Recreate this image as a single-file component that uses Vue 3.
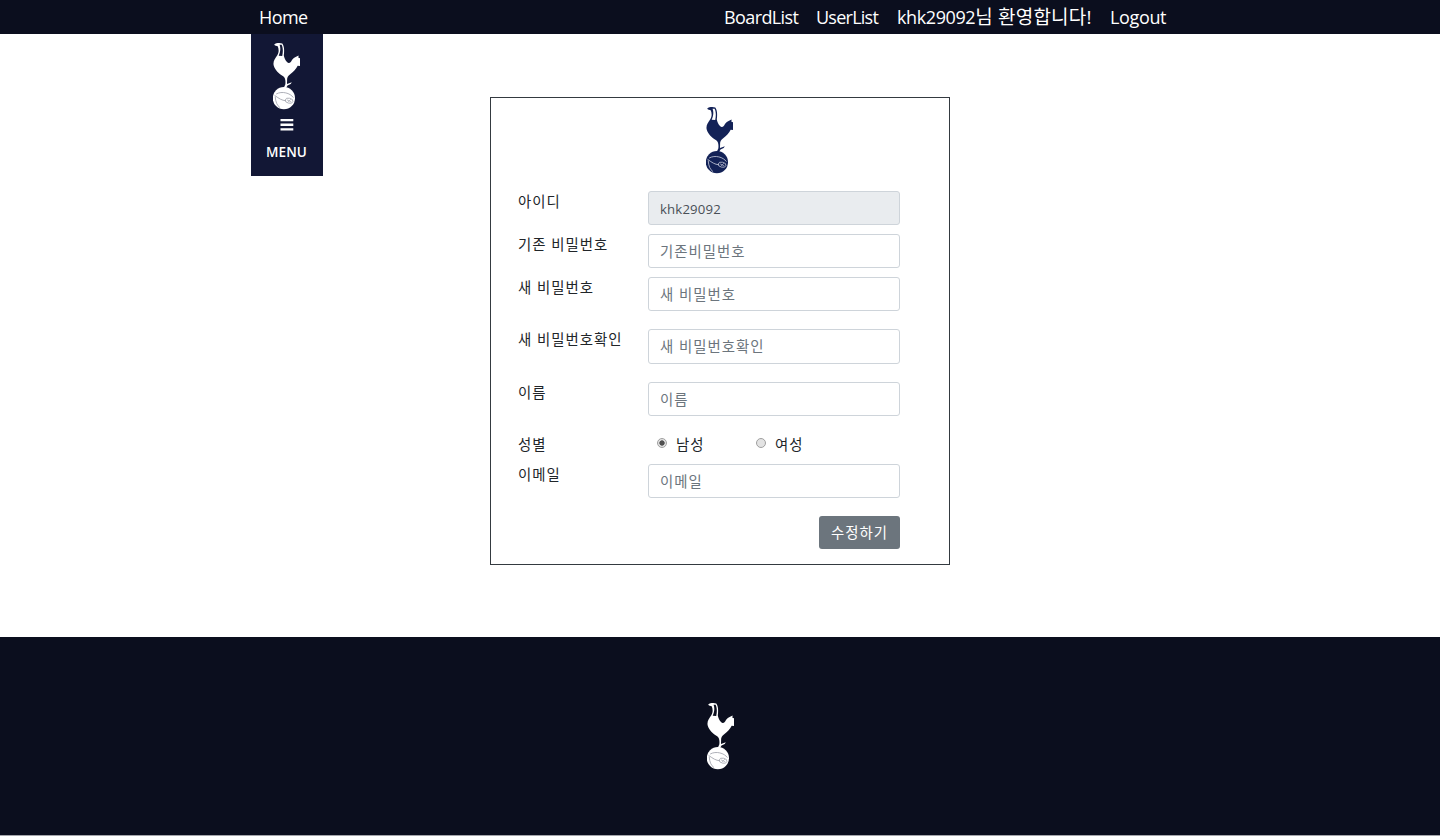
<script setup>
import { h, ref } from 'vue'

const gender = ref('male')
const fields = [
  { id: 'userid', label: '아이디', value: 'khk29092', disabled: true, cls: 'id-row' },
  { id: 'oldpw', label: '기존 비밀번호', placeholder: '기존비밀번호', type: 'password', cls: 'old-row' },
  { id: 'newpw', label: '새 비밀번호', placeholder: '새 비밀번호', type: 'password', cls: 'new-row' },
  { id: 'confirm', label: '새 비밀번호확인', placeholder: '새 비밀번호확인', type: 'password', cls: 'confirm-row' },
  { id: 'name', label: '이름', placeholder: '이름', cls: 'name-row' }
]

const Crest = (props) => h('svg', { width: 28, height: 67, viewBox: '0 0 28 67', 'aria-hidden': 'true' }, [
  h('path', { fill: props.ink, 'fill-rule': 'evenodd', d: 'M1.2 1.5C3 0 7-.4 9.3.6C11.3 3 11.4 8 10.8 12.2C11.3 15.5 13.5 19.6 15.8 19.9C17.8 20.2 18.4 17.4 20 15.8C21.6 14.3 23.5 13.6 25.6 12.6L25.4 14.8L27 15.2V23L24.7 22.8C23.2 25.8 20.5 28.8 17.2 31.3C14.8 33 14 34.8 14.1 37.2L14 41L16.8 39.9L18.8 39.3L17.7 41L14.5 42.4L13.1 45H10.7L12.3 41.4C12.8 37.7 12.2 34.8 10.2 33.3C6 30.6 2 27 .7 22.4C-.3 18.4 2.2 15.3 4.3 12.2C6.2 9 5.8 5.8 4.7 3.2L2 2.6ZM6.6 1.8C7.8 4.8 7.5 9 5.7 12.7L9.2 12.9C10.2 8.5 10 4.5 8.6 1.8Z' }),
  h('circle', { cx: 10.9, cy: 55.2, r: 11.1, fill: props.ink }),
  h('path', { fill: 'none', stroke: props.line, 'stroke-width': 0.9, d: 'M1.5 52.3C6.5 55.8 8.5 57.3 13 57.8M3.2 51C9 47.8 17.2 50 20.4 54.6M2.2 53.5C2.6 59 4 62.5 7 64.6' }),
  h('ellipse', { cx: 16.1, cy: 57.7, rx: 3.9, ry: 2.5, fill: 'none', stroke: props.line, 'stroke-width': 0.8, transform: 'rotate(12 16.1 57.7)' }),
  h('path', { fill: 'none', stroke: props.line, 'stroke-width': 0.7, d: 'M13.8 56.8L18.3 58.8M17.8 56.2L14.8 59.3' })
])
Crest.props = ['ink', 'line']
</script>

<template>
  <div class="page">
    <header class="topbar">
      <nav>
        <a class="home">Home</a>
        <div class="links">
          <a class="board">BoardList</a>
          <a class="users">UserList</a>
          <a class="welcome">khk29092<span>님 환영합니다!</span></a>
          <a class="logout">Logout</a>
        </div>
      </nav>
    </header>
    <main>
      <aside class="menu">
        <Crest ink="#ffffff" line="#a5a7b0" />
        <svg class="bars" width="14" height="12" viewBox="0 0 14 12"><path fill="#fff" d="M.5 0h12.8v2.3H.5zM.5 4.6h12.8v2.3H.5zM.5 9.2h12.8v2.3H.5z" /></svg>
        <span>MENU</span>
      </aside>
      <form class="card" @submit.prevent>
        <Crest class="card-crest" ink="#132257" line="#b7bcd0" />
        <div v-for="f in fields" :key="f.id" class="row" :class="f.cls">
          <label :for="f.id">{{ f.label }}</label>
          <input :id="f.id" class="control" :type="f.type || 'text'" :value="f.value" :placeholder="f.placeholder" :disabled="f.disabled">
        </div>
        <div class="row gender-row">
          <label>성별</label>
          <div class="options">
            <label><input v-model="gender" type="radio" value="male">남성</label>
            <label><input v-model="gender" type="radio" value="female">여성</label>
          </div>
        </div>
        <div class="row email-row">
          <label for="email">이메일</label>
          <input id="email" class="control" placeholder="이메일">
        </div>
        <button>수정하기</button>
      </form>
    </main>
    <footer><Crest ink="#ffffff" line="#a5a7b0" /></footer>
  </div>
</template>

<style>
html, body { margin: 0; overflow: hidden; background: #fff; }
</style>

<style scoped>
* { box-sizing: border-box; }
.page { height: 836px; display: flex; flex-direction: column; color: #212529; font-family: "Open Sans", "Noto Sans CJK KR", sans-serif; background: linear-gradient(#fff 835px, #a4a5ab 835px); }
svg { display: block; }
.topbar { height: 34px; background: #0b0e1e; flex: none; }
nav { width: 908px; height: 34px; margin-left: 259px; display: flex; justify-content: space-between; color: #fff; font-size: 18px; line-height: 35px; white-space: nowrap; }
.links { display: flex; gap: 18px; }
.home { letter-spacing: -.55px; }
.board { width: 74px; letter-spacing: -.6px; }
.users { width: 63px; letter-spacing: -.75px; }
.welcome { width: 195px; line-height: 34px; letter-spacing: -.4px; }
.welcome span { font-size: 19px; letter-spacing: .2px; }
.logout { width: 57px; letter-spacing: -.35px; }
main { height: 603px; flex: none; display: grid; grid-template-columns: 72px 460px; column-gap: 167px; align-items: start; padding-left: 251px; }
.menu { height: 142px; background: #121735; color: #fff; display: flex; flex-direction: column; align-items: center; padding-top: 9px; }
.bars { margin-top: 9px; }
.menu span { margin: 11px 1px 0 0; font-size: 13.5px; font-weight: 600; line-height: 20px; letter-spacing: .1px; }
.card { margin-top: 63px; height: 468px; border: 1px solid #343a40; padding: 9px 49px 0 27px; display: flex; flex-direction: column; }
.card-crest { align-self: center; margin-right: -21px; flex: none; }
.row { display: grid; grid-template-columns: 130px 252px; font-size: 14.4px; line-height: 21px; letter-spacing: 1px; flex: none; }
.row > label, .options label { color: #212529; }
.id-row { margin-top: 17px; height: 43px; }
.old-row { height: 43px; }
.new-row { height: 52px; }
.confirm-row { height: 53px; }
.name-row { height: 52px; }
.control { width: 252px; height: 34px; border: 1px solid #ced4da; border-radius: 3px; padding: 0 11px; background: #fff; color: #495057; font: inherit; font-size: 14.4px; letter-spacing: 1px; outline: none; }
.confirm-row .control { height: 35px; }
.control::placeholder { color: #6c757d; opacity: 1; }
.control:disabled { padding-top: 2px; background: #e9ecef; font-size: 13.2px; letter-spacing: .15px; }
.gender-row { height: 30px; }
.options { display: flex; padding-left: 9px; }
.options label { display: flex; width: 99px; }
.options input { appearance: none; width: 10px; height: 10px; margin: 4px 9px 0 0; border: 1px solid #a0a0a0; border-radius: 50%; background: #e3e3e3; }
.options input:checked { background: radial-gradient(circle, #505050 0 2.3px, #e2e2e2 3px); }
.email-row { height: 52px; }
button { width: 81px; height: 33px; align-self: flex-end; border: 0; border-radius: 3px; padding: 0 0 2px; background: #6c757d; color: #fff; font: inherit; font-size: 14.4px; letter-spacing: 1px; }
footer { height: 198px; flex: none; background: #0b0e1e; padding: 66px 0 0 707px; }
</style>
